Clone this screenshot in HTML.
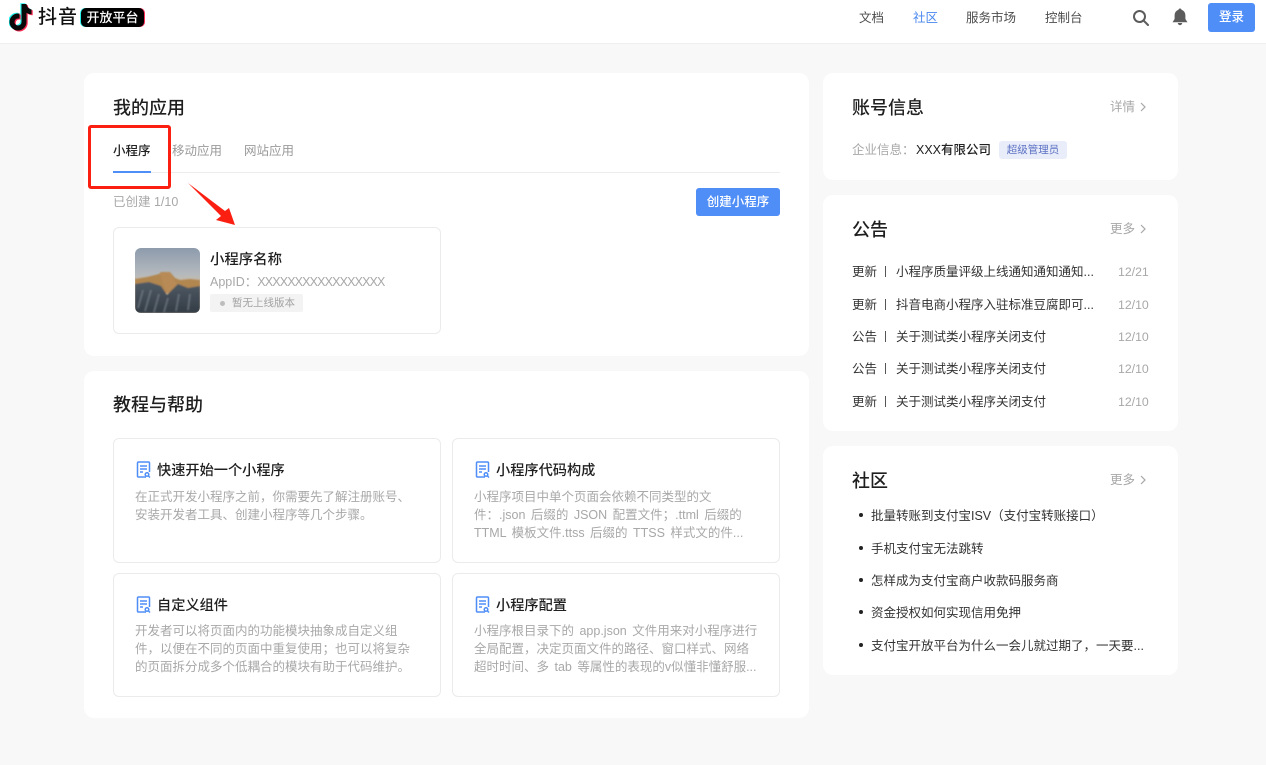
<!DOCTYPE html>
<html lang="zh"><head><meta charset="utf-8"><title>抖音开放平台</title>
<style>
*{box-sizing:border-box;margin:0;padding:0}
html,body{width:1266px;height:765px;overflow:hidden;background:#f8f8f8;font-family:"Liberation Sans","Noto Sans CJK SC",sans-serif}
.a{position:absolute;white-space:nowrap}
.card{position:absolute;background:#fff;border-radius:10px}
.box{position:absolute;background:#fff;border:1px solid #ebebeb;border-radius:6px}
.h{font-size:18px;line-height:26px;font-weight:500;color:#1f1f1f}
.nav{font-size:12.5px;line-height:18px;top:9px;color:#4d4d4d}
.g{font-size:12.5px;line-height:18px;color:#9a9a9a}
.t{font-size:12.5px;line-height:18px;color:#333}
.d{font-size:12.5px;line-height:18px;color:#a8a8a8}
.dt{font-size:12.3px;line-height:18px;color:#a8a8a8}
.tt{font-size:14.2px;line-height:20px;font-weight:500;color:#1f1f1f}
.p{font-size:12.5px;line-height:18px;color:#a8a8a8;word-spacing:2px}
.dot{position:absolute;width:4px;height:4px;border-radius:50%;background:#222}
</style></head><body>
<div class="a" style="left:0;top:0;width:1266px;height:44px;background:#fff;border-bottom:1px solid #efefef"></div>
<svg class="a" style="left:9px;top:3px" width="28" height="32" viewBox="0 0 28 32">
<path d="M12.500 1h5c.4 3 2.300 5 5 5.300v5c-2 0-3.700-.6-5-1.500v9.200a8.500 8.500 0 1 1-8.500-8.500h1.500v5H9a3.500 3.500 0 1 0 3.500 3.500z" fill="#25f4ee" transform="translate(-1.200 -.8)"/>
<path d="M12.500 1h5c.4 3 2.300 5 5 5.300v5c-2 0-3.700-.6-5-1.500v9.200a8.500 8.500 0 1 1-8.500-8.500h1.500v5H9a3.500 3.500 0 1 0 3.500 3.500z" fill="#fe2c55" transform="translate(1.200 1)"/>
<path d="M12.500 1h5c.4 3 2.300 5 5 5.300v5c-2 0-3.700-.6-5-1.500v9.200a8.500 8.500 0 1 1-8.500-8.500h1.500v5H9a3.500 3.500 0 1 0 3.500 3.500z" fill="#0a0a0a"/>
</svg>
<div class="a" style="left:38px;top:4px;font-size:19px;line-height:28px;letter-spacing:1px;color:#111;font-weight:500">抖音</div>
<div class="a" style="left:82px;top:8px;width:63px;height:19px;border-radius:5px;background:#fe2c55"></div>
<div class="a" style="left:80px;top:8px;width:63px;height:19px;border-radius:5px;background:#25f4ee"></div>
<div class="a" style="left:81px;top:8px;width:63px;height:19px;border-radius:5px;background:#000;color:#fff;font-size:13px;line-height:19px;text-align:center;font-weight:500">开放平台</div>
<div class="a nav" style="left:859px">文档</div>
<div class="a nav" style="left:913px;color:#4a87ee">社区</div>
<div class="a nav" style="left:966px">服务市场</div>
<div class="a nav" style="left:1045px">控制台</div>
<svg class="a" style="left:1132px;top:9px" width="18" height="18" viewBox="0 0 18 18" fill="none" stroke="#5c5c5c" stroke-width="2"><circle cx="7.500" cy="7.500" r="5.500"/><path d="M11.500 11.500L16 16" stroke-linecap="round"/></svg>
<svg class="a" style="left:1172px;top:8px" width="16" height="18" viewBox="0 0 16 18" fill="#5c5c5c"><path d="M8 .5c.9 0 1.500.6 1.600 1.400C12.200 2.700 13.400 5 13.400 7.500V11l2.100 3.200H.5L2.600 11V7.500C2.600 5 3.800 2.700 6.400 1.900 6.500 1.100 7.100.5 8 .5z"/><path d="M5.800 15h4.400a2.200 2.200 0 0 1-4.400 0z"/></svg>
<div class="a" style="left:1208px;top:3px;width:47px;height:29px;border-radius:3px;background:#4f8ef7;color:#fff;font-size:12.5px;line-height:29px;text-align:center;font-weight:500">登录</div>

<div class="card" style="left:84px;top:73px;width:725px;height:283px"></div>
<div class="a h" style="left:113px;top:95px">我的应用</div>
<div class="a" style="left:113px;top:172px;width:667px;height:1px;background:#ededed"></div>
<div class="a" style="left:113px;top:171px;width:38px;height:2px;background:#4f8ef7"></div>
<div class="a" style="left:113px;top:142px;font-size:12.5px;line-height:18px;color:#222;font-weight:500">小程序</div>
<div class="a g" style="left:172px;top:142px">移动应用</div>
<div class="a g" style="left:244px;top:142px">网站应用</div>
<div class="a" style="left:88px;top:125px;width:83px;height:64px;border:3px solid #fb1f12;border-radius:3px"></div>
<svg class="a" style="left:186px;top:181px" width="50" height="48" viewBox="0 0 50 48"><path d="M2 2L39 30 43 27 49 44 30 39 35 35z" fill="#fb1f12"/></svg>
<div class="a g" style="left:113px;top:193px;color:#a8a8a8">已创建 1/10</div>
<div class="a" style="left:696px;top:188px;width:84px;height:28px;border-radius:3px;background:#4f8ef7;color:#fff;font-size:12.5px;line-height:28px;text-align:center;font-weight:500">创建小程序</div>
<div class="box" style="left:113px;top:227px;width:328px;height:107px"></div>
<svg class="a" style="left:135px;top:248px;border-radius:6px" width="65" height="65" viewBox="0 0 65 65">
<defs><linearGradient id="s" x1="0" y1="0" x2="0" y2="1"><stop offset="0" stop-color="#8d9bac"/><stop offset=".4" stop-color="#b4b9bd"/><stop offset=".55" stop-color="#cdbca6"/></linearGradient><linearGradient id="m" x1="0" y1="0" x2="0" y2="1"><stop offset="0" stop-color="#4f5a64"/><stop offset="1" stop-color="#333c45"/></linearGradient><filter id="b"><feGaussianBlur stdDeviation=".7"/></filter></defs>
<rect width="65" height="65" fill="url(#s)"/>
<g filter="url(#b)">
<path d="M0 31L12 29 24 26 26 24 35 24 40 30 45 32 55 31 65 32V45H0z" fill="#b18650"/>
<path d="M25 25L35 24 39 32 42 36 32 46 28 36z" fill="#b88a56"/>
<path d="M0 36L14 34 26 38 32 47 43 36 53 40 65 38V65H0z" fill="url(#m)"/>
<path d="M8 42L3 60M16 42L10 63M24 46L19 64M33 50L29 64M44 46L41 63M55 46L53 62" stroke="#7f8a93" stroke-width="1.800" fill="none" opacity=".55"/>
</g>
</svg>
<div class="a tt" style="left:210px;top:250px;font-size:14.4px">小程序名称</div>
<div class="a" style="left:210px;top:273px;font-size:12.5px;line-height:18px;color:#a8a8a8">AppID：<span style="letter-spacing:-.85px">XXXXXXXXXXXXXXXXX</span></div>
<div class="a" style="left:210px;top:294px;width:93px;height:18px;border-radius:2px;background:#f3f3f3"></div>
<div class="a" style="left:220px;top:301px;width:5px;height:5px;border-radius:50%;background:#bdbdbd"></div>
<div class="a" style="left:232px;top:295px;font-size:10.5px;line-height:16px;color:#a3a3a3">暂无上线版本</div>

<div class="card" style="left:84px;top:371px;width:725px;height:347px"></div>
<div class="a h" style="left:113px;top:392px">教程与帮助</div>
<div class="box" style="left:113px;top:438px;width:328px;height:125px"></div>
<div class="box" style="left:452px;top:438px;width:328px;height:125px"></div>
<div class="box" style="left:113px;top:573px;width:328px;height:124px"></div>
<div class="box" style="left:452px;top:573px;width:328px;height:124px"></div>
<svg width="0" height="0" style="position:absolute"><defs><g id="doc" fill="none" stroke="#4f8ef7" stroke-width="1.500"><path d="M10 16H2.500a1 1 0 0 1-1-1V2a1 1 0 0 1 1-1h10a1 1 0 0 1 1 1v9"/><path d="M4 5h7M4 8h7M4 11h3"/><circle cx="11" cy="13.500" r="1.800"/><path d="M12.500 15l1.500 1.500"/></g></defs></svg>
<svg class="a" style="left:136px;top:461px" width="16" height="18"><use href="#doc"/></svg>
<svg class="a" style="left:475px;top:461px" width="16" height="18"><use href="#doc"/></svg>
<svg class="a" style="left:136px;top:596px" width="16" height="18"><use href="#doc"/></svg>
<svg class="a" style="left:475px;top:596px" width="16" height="18"><use href="#doc"/></svg>
<div class="a tt" style="left:157px;top:461px">快速开始一个小程序</div>
<div class="a tt" style="left:496px;top:461px">小程序代码构成</div>
<div class="a tt" style="left:157px;top:596px">自定义组件</div>
<div class="a tt" style="left:496px;top:596px">小程序配置</div>
<div class="a p" style="left:135px;top:488px">在正式开发小程序之前，你需要先了解注册账号、<br>安装开发者工具、创建小程序等几个步骤。</div>
<div class="a p" style="left:474px;top:488px">小程序项目中单个页面会依赖不同类型的文<br>件：.json 后缀的 JSON 配置文件；.ttml 后缀的<br>TTML 模板文件.ttss 后缀的 TTSS 样式文的件...</div>
<div class="a p" style="left:135px;top:622px">开发者可以将页面内的功能模块抽象成自定义组<br>件，以便在不同的页面中重复使用；也可以将复杂<br>的页面拆分成多个低耦合的模块有助于代码维护。</div>
<div class="a p" style="left:474px;top:622px">小程序根目录下的 app.json 文件用来对小程序进行<br>全局配置，决定页面文件的路径、窗口样式、网络<br>超时时间、多 tab 等属性的表现的v似懂非懂舒服...</div>

<div class="card" style="left:823px;top:73px;width:355px;height:107px"></div>
<div class="a h" style="left:852px;top:95px">账号信息</div>
<div class="a d" style="left:1110px;top:98px">详情</div>
<svg class="a" style="left:1139px;top:101px" width="8" height="12" fill="none" stroke="#a8a8a8" stroke-width="1.200"><path d="M2 2L6 6 2 10"/></svg>
<div class="a d" style="left:852px;top:141px">企业信息：</div>
<div class="a t" style="left:916px;top:141px;color:#222;font-weight:500">XXX有限公司</div>
<div class="a" style="left:999px;top:141px;width:68px;height:18px;border-radius:3px;background:#e9edfa;color:#5d72c4;font-size:10.5px;line-height:18px;text-align:center">超级管理员</div>

<div class="card" style="left:823px;top:195px;width:355px;height:236px"></div>
<div class="a h" style="left:852px;top:217px">公告</div>
<div class="a d" style="left:1110px;top:220px">更多</div>
<svg class="a" style="left:1139px;top:223px" width="8" height="12" fill="none" stroke="#a8a8a8" stroke-width="1.200"><path d="M2 2L6 6 2 10"/></svg>
<div class="a t" style="left:852px;top:263px">更新</div><div class="a" style="left:885px;top:266px;width:1px;height:11px;background:#555"></div><div class="a t" style="left:896px;top:263px">小程序质量评级上线通知通知通知...</div><div class="a dt" style="left:1118px;top:263px">12/21</div>
<div class="a t" style="left:852px;top:296px">更新</div><div class="a" style="left:885px;top:299px;width:1px;height:11px;background:#555"></div><div class="a t" style="left:896px;top:296px">抖音电商小程序入驻标准豆腐即可...</div><div class="a dt" style="left:1118px;top:296px">12/10</div>
<div class="a t" style="left:852px;top:328px">公告</div><div class="a" style="left:885px;top:331px;width:1px;height:11px;background:#555"></div><div class="a t" style="left:896px;top:328px">关于测试类小程序关闭支付</div><div class="a dt" style="left:1118px;top:328px">12/10</div>
<div class="a t" style="left:852px;top:360px">公告</div><div class="a" style="left:885px;top:363px;width:1px;height:11px;background:#555"></div><div class="a t" style="left:896px;top:360px">关于测试类小程序关闭支付</div><div class="a dt" style="left:1118px;top:360px">12/10</div>
<div class="a t" style="left:852px;top:393px">更新</div><div class="a" style="left:885px;top:396px;width:1px;height:11px;background:#555"></div><div class="a t" style="left:896px;top:393px">关于测试类小程序关闭支付</div><div class="a dt" style="left:1118px;top:393px">12/10</div>

<div class="card" style="left:823px;top:446px;width:355px;height:229px"></div>
<div class="a h" style="left:852px;top:468px">社区</div>
<div class="a d" style="left:1110px;top:471px">更多</div>
<svg class="a" style="left:1139px;top:474px" width="8" height="12" fill="none" stroke="#a8a8a8" stroke-width="1.200"><path d="M2 2L6 6 2 10"/></svg>
<div class="dot" style="left:859px;top:513px"></div><div class="a t" style="left:871px;top:507px">批量转账到支付宝ISV（支付宝转账接口）</div>
<div class="dot" style="left:859px;top:546px"></div><div class="a t" style="left:871px;top:540px">手机支付宝无法跳转</div>
<div class="dot" style="left:859px;top:578px"></div><div class="a t" style="left:871px;top:572px">怎样成为支付宝商户收款码服务商</div>
<div class="dot" style="left:859px;top:610px"></div><div class="a t" style="left:871px;top:604px">资金授权如何实现信用免押</div>
<div class="dot" style="left:859px;top:643px"></div><div class="a t" style="left:871px;top:637px">支付宝开放平台为什么一会儿就过期了，一天要...</div>
</body></html>
